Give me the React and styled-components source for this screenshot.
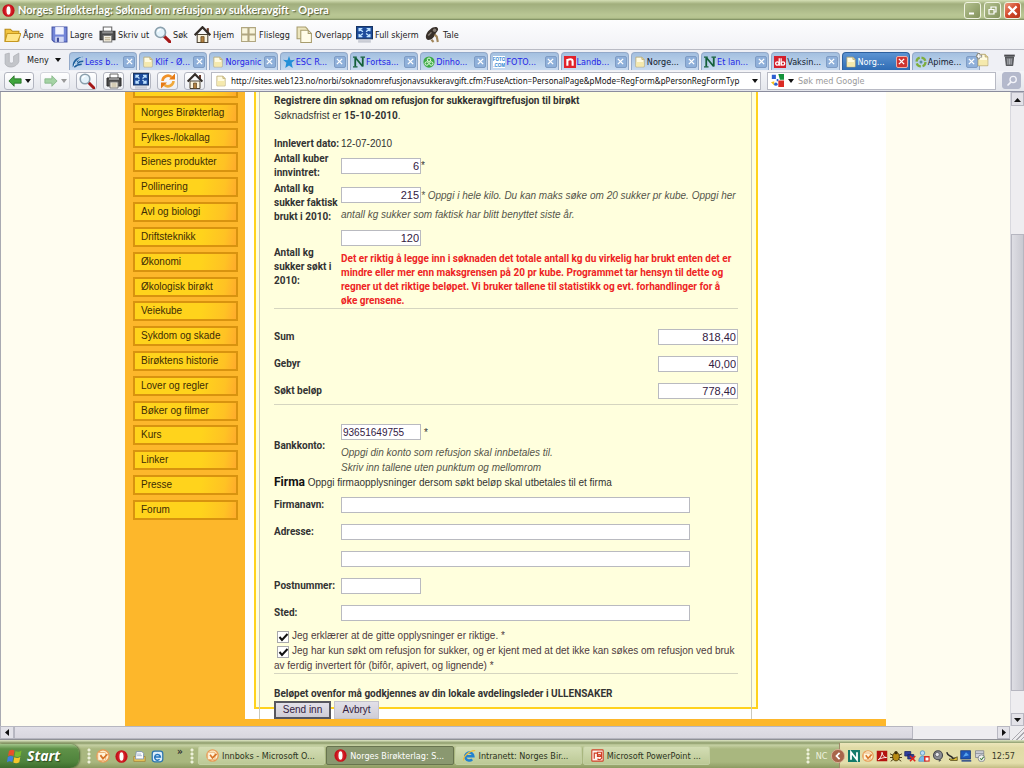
import React from "react";
import styled, { createGlobalStyle } from "styled-components";

const UI = `"DejaVu Sans Condensed", "Noto Sans", sans-serif`;
const WEB = `"Liberation Sans", Arial, sans-serif`;
const STRONG = `Roboto, "Liberation Sans", sans-serif`;

const Global = createGlobalStyle`
  * { box-sizing: border-box; }
  body { margin: 0; font-family: ${WEB}; font-size: 10px; color: #333; overflow: hidden; }
  button, input { font-family: inherit; margin: 0; }
`;

/* ---------- icons ---------- */

const Page = <><path d="M2.5 1.5h8l3 3v10h-11z" fill="#fffbe0" stroke="#b5a468" /><path d="M10.5 1.5v3h3" fill="#eadfa8" stroke="#b5a468" /><path d="M3 8h10v6H3z" fill="#f5e9ad" /></>;
const Opera = <><ellipse cx="8" cy="8" rx="7.5" ry="7.8" fill="#c4101a" /><ellipse cx="8" cy="8" rx="5" ry="7" fill="#e02a30" opacity=".6" /><ellipse cx="8" cy="8" rx="2.5" ry="5.3" fill="#fff" /></>;
const Outlook = <><circle cx="8" cy="8" r="7" fill="#fdf0d0" stroke="#e89a55" strokeWidth="1.6" /><rect x="2" y="4" width="9" height="9" rx="1" fill="#fff3d8" stroke="#e8a868" /><path d="M5 7l3 4 5-5" fill="none" stroke="#d87428" strokeWidth="2" /></>;
const N = <><path d="M3 2v12M3 2l10 12M13 2v12" stroke="#14603a" strokeWidth="2.4" fill="none" /><path d="M0 1.5h5M0 14.5h6M10 1.5h6" stroke="#14603a" strokeWidth="1.4" /></>;

const ICONS = {
  folder: <><path d="M1 3h5l2 2h6v9H1z" fill="#f3c541" stroke="#b88a17" /><path d="M3 7h13l-3 7.500H1z" fill="#ffe588" stroke="#c6981f" /></>,
  save: <><path d="M1 1h14v14H3l-2-2z" fill="#7385d8" stroke="#4453a4" /><rect x="4" y="1" width="8" height="7" fill="#f1f3ff" /><rect x="4" y="10" width="8" height="5" fill="#d2d8f4" /><rect x="5.500" y="11" width="2" height="4" fill="#3f4c9a" /></>,
  print: <><path d="M4 1h8v5H4z" fill="#fff" stroke="#666" /><path d="M1 5h14v8H1z" fill="#4b4b4b" stroke="#2a2a2a" /><path d="M3 5h10v2H3z" fill="#8f8f8f" /><path d="M4 9h8v6H4z" fill="#f4efe2" stroke="#777" /><path d="M5.500 11h5M5.500 13h5" stroke="#b5a988" /></>,
  lens: <><path d="M9 9l6 6" stroke="#a51818" strokeWidth="3" strokeLinecap="round" /><circle cx="6" cy="6" r="4.800" fill="#e4f3fb" stroke="#8ba0ad" strokeWidth="1.600" /><path d="M3.500 5.500a3 3 0 013-2.300" stroke="#fff" strokeWidth="1.300" fill="none" /></>,
  home: <><path d="M3 8h10v7.500H3z" fill="#fbf3dd" stroke="#4a4235" /><path d="M12 2h2v5h-2z" fill="#6d3b2b" /><path d="M.7 8.600L8 1.200l7.300 7.400" fill="none" stroke="#332d28" strokeWidth="2.200" /><path d="M6.500 10h3v5.500h-3z" fill="#b38142" stroke="#5b431f" strokeWidth=".7" /></>,
  tile: <><rect x="1" y="1" width="14" height="14" fill="#d8cfae" /><path d="M1.500 1.500h6v6h-6zM8.500 1.500h6v6h-6zM1.500 8.500h6v6h-6zM8.500 8.500h6v6h-6z" fill="#f9f5dc" stroke="#b0a680" /></>,
  overlap: <><path d="M1 1h8l2 2v9H1z" fill="#ece5bd" stroke="#a79c6e" /><path d="M4.500 4h7l3 3v8.500h-10z" fill="#fffce8" stroke="#a79c6e" /><path d="M11.500 4v3h3" fill="none" stroke="#a79c6e" /></>,
  full: <><rect x=".5" y=".5" width="15" height="11.500" fill="#1d4c9c" stroke="#173563" /><path d="M3 5V2.500h3M10 2.500h3V5M13 7.500V10h-3M6 10H3V7.500M3.500 3l3 2.500M12.500 3l-3 2.500M3.500 9.500l3-2.500M12.500 9.500l-3-2.500" fill="none" stroke="#bfe3ff" strokeWidth="1.300" /><path d="M2 14.500h12" stroke="#c9ccd4" strokeWidth="2.400" /></>,
  talk: <><path d="M3 13C0 10 3 5 6 3c2-2 6-3 7-1 1 2-1 3-2 5-1 3-4 7-8 6z" fill="#38302a" /><path d="M10 8l2 2 1 5M7 13l2 2" stroke="#a0855a" strokeWidth="2" fill="none" /><circle cx="10" cy="4" r="1.600" fill="#857d76" /><path d="M4 9l3-3" stroke="#8d857c" strokeWidth="1.300" /></>,
  menu: <path d="M1 2l4-1v8c1 2 3 2 4 0V4l5-3v8c-2 6-11 7-13 2z" fill="#c3c5ca" stroke="#a8aab0" strokeWidth=".6" />,
  feather: <><path d="M1 15C0 6 6 1 15 1 10 3 8 6 8 8c-3 1-5 3-7 7z" fill="#1d5f9c" /><path d="M3 12c2-5 5-8 10-10M5 9l6-1M3 13l7-2" stroke="#d9ecf9" strokeWidth="1.200" fill="none" /><path d="M3 15c3-3 6-4 10-4M7 10c2-2 4-3 8-3" stroke="#1d5f9c" strokeWidth="1.800" fill="none" /></>,
  page: Page,
  newpage: <>{Page}<path d="M3 0v7M0 3.500h7" stroke="#8a8a80" strokeWidth="3" /><path d="M3.200 1v5M1 3.500h5" stroke="#fff" strokeWidth="1.500" /></>,
  star: <path d="M8 0l2 5.500 6-.5-4.500 4L13 16l-5-3.500L3 16l1.500-7L0 5l6 .500z" fill="#2490d8" />,
  n: N,
  dinho: <><circle cx="8" cy="8" r="7.500" fill="#3faa48" /><circle cx="8" cy="5" r="2.300" fill="none" stroke="#e9ffe5" strokeWidth="1.300" /><circle cx="5" cy="10" r="2.300" fill="none" stroke="#e9ffe5" strokeWidth="1.300" /><circle cx="11" cy="10" r="2.300" fill="none" stroke="#e9ffe5" strokeWidth="1.300" /></>,
  foto: <><rect width="16" height="16" fill="#fff" /><text x="8" y="7" fontSize="6" fontWeight="bold" textAnchor="middle" fill="#2b84cf" fontFamily="Liberation Sans">FOTO</text><text x="8" y="14" fontSize="6" fontWeight="bold" textAnchor="middle" fill="#2b84cf" fontFamily="Liberation Sans">.COM</text></>,
  landb: <><rect width="16" height="16" fill="#e2222b" /><path d="M4.500 13V4M4.500 6c1-2 7-3 7 1v6" stroke="#fff" strokeWidth="2.800" fill="none" /></>,
  db: <><rect width="16" height="16" fill="#d41f2c" /><circle cx="4.500" cy="10" r="2.300" fill="none" stroke="#fff" strokeWidth="1.700" /><path d="M7 3v10M9.500 3v10" stroke="#fff" strokeWidth="1.700" /><circle cx="12" cy="10" r="2.300" fill="none" stroke="#fff" strokeWidth="1.700" /></>,
  apime: <><circle cx="8" cy="8" r="6" fill="none" stroke="#7fae3d" strokeWidth="3" strokeDasharray="7 2.400" /><circle cx="8" cy="8" r="2" fill="#5a8f9e" /></>,
  trash: <><path d="M3 5h10l-1 10.500H4z" fill="#6d6f74" stroke="#3a3b3f" /><path d="M1.500 2h13v2.500h-13z" fill="#494a4e" /><path d="M6 7v7M8 7v7M10 7v7" stroke="#b9bbc0" /></>,
  back: <path d="M1 8l6-6v3.500h8v5H7V14z" fill="#3fa53d" stroke="#1e6a20" strokeWidth=".9" />,
  forward: <path d="M15 8L9 2v3.500H1v5h8V14z" fill="#a4d3a4" stroke="#81b283" strokeWidth=".9" />,
  reload: <><path d="M2.500 8a5.500 5.500 0 019-4" fill="none" stroke="#f0922a" strokeWidth="2.600" /><path d="M9 6.500h6v-6z" fill="#e67a14" /><path d="M13.500 8a5.500 5.500 0 01-9 4" fill="none" stroke="#f0a83a" strokeWidth="2.600" /><path d="M7 9.500H1v6z" fill="#e67a14" /></>,
  google: <><rect width="16" height="16" fill="#fff" /><path d="M1 1h5v5H1zM7 6h2v3H7z" fill="#2c5fd0" /><path d="M9 0h7v7h-5z" fill="#12923b" /><path d="M9 8h7v8H9z" fill="#db2b24" /><path d="M0 10l4-1v5z" fill="#f6c11d" /><ellipse cx="6" cy="12.500" rx="2.200" ry="2" fill="#2c5fd0" /></>,
  go: <><circle cx="9.500" cy="6" r="4.200" fill="none" stroke="#f3f4fa" strokeWidth="1.800" /><path d="M6.500 9.500L2 14" stroke="#f3f4fa" strokeWidth="2.200" /></>,
  opera: Opera,
  outlook: Outlook,
  flag: <><path d="M2 3c2-1.500 3.500-1.500 5.500-.5L6.500 8C4.500 7 3 7 1 8z" fill="#e8502a" /><path d="M8.500 3c2 1 4 1 6-.5L13.500 8c-2 1.300-4 1.300-6 .3z" fill="#7bbb2e" /><path d="M.8 9c2-1.300 3.500-1.200 5.500-.2L5.300 14c-2-1-3.500-1-5.300.2z" fill="#3f7fe0" /><path d="M7.300 9.300c2 1 4 1 6-.3l-1 5.200c-2 1.300-4 1.300-6 .3z" fill="#f5c72a" /></>,
  desk: <><path d="M1 8h14v6H1z" fill="#e9c75b" stroke="#a5843a" /><path d="M4 2h7l2 2v7H3z" fill="#fff" stroke="#7990b0" /><path d="M5 5h5M5 7h6" stroke="#94a8c4" /></>,
  edesk: <><rect x="1.500" y="1.500" width="13" height="13" rx="3" fill="#dceefb" stroke="#2a74ae" strokeWidth="1.500" /><path d="M4.500 8.500h7a3.500 3.500 0 10-1 3" fill="none" stroke="#2273bc" strokeWidth="1.800" /></>,
  ie: <><path d="M3.500 9h9.300a5 5 0 10-1.500 3.800" fill="none" stroke="#2381cf" strokeWidth="3" /><path d="M1 14C-1 10 9 1 15 2" fill="none" stroke="#eebd3a" strokeWidth="1.500" /></>,
  ppt: <><rect x="1" y="1" width="14" height="14" rx="1" fill="#fff3ee" stroke="#cf3f25" strokeWidth="1.400" /><path d="M4 12V5h4M8 4h5v5H8zM8 12a3 3 0 100-4" fill="none" stroke="#cf3f25" strokeWidth="1.500" /></>,
  chevron: <><circle cx="8" cy="8" r="7.500" fill="#a8654a" stroke="#d8b49a" /><path d="M9.800 4.500L6.300 8l3.500 3.500" fill="none" stroke="#fff" strokeWidth="2" /></>,
  nbox: <><rect width="16" height="16" fill="#137a6a" /><path d="M4 13V3l8 10V3" fill="none" stroke="#fff" strokeWidth="2.400" /></>,
  pdf: <><rect x="1" y="1" width="14" height="14" fill="#b4120f" /><path d="M3 13c4-3 5-7 5-10 1 5 3 7 6 7-4 0-8 1-11 3z" fill="none" stroke="#fff" strokeWidth="1.200" /></>,
  bug: <><ellipse cx="8" cy="9" rx="4.500" ry="5.500" fill="#b88b12" stroke="#3c2e08" /><circle cx="8" cy="3.500" r="2.200" fill="#3c2e08" /><path d="M0 5l4 2M0 10h4M1 15l4-3M16 5l-4 2M16 10h-4M15 15l-4-3" stroke="#3c2e08" strokeWidth="1.200" /></>,
  netx: <><path d="M1 2h8v6H1zM5 6h8v6H5z" fill="#2f3f9c" stroke="#1b2560" /><path d="M8 8l7 7M15 8l-7 7" stroke="#df2620" strokeWidth="2.200" /></>,
  user: <><circle cx="6" cy="4" r="3" fill="#bcdcf4" stroke="#4d8dc0" /><path d="M1 15c0-9 10-9 10 0z" fill="#79b8e8" stroke="#4d8dc0" /><rect x="8" y="8" width="7.500" height="7.500" fill="#d92d24" /><path d="M10 10h4v4h-4z" fill="#fff" /></>,
  speaker: <><circle cx="8" cy="7" r="6" fill="#8b8d93" stroke="#44464b" strokeWidth="1.500" /><circle cx="7" cy="6" r="2.800" fill="#e4e5e8" stroke="#55575c" /><path d="M9 15l3-2" stroke="#44464b" strokeWidth="1.500" /></>,
  plug: <><path d="M1 3c2 7 6 3 8 8h5" fill="none" stroke="#2b2b2b" strokeWidth="2" /><path d="M4 12h6l5-3v5H6z" fill="#e2c33d" stroke="#50451c" /></>,
  screen: <><rect x="1" y="1" width="13" height="11" fill="#1e57b8" stroke="#17356f" /><path d="M4 9l4-6 4 4z" fill="#58a5ee" /><path d="M2 14.500h13" stroke="#28488a" strokeWidth="2" /></>,
  safe: <><path d="M2 1h11v9H2z" fill="#cfd2d8" stroke="#7b7f88" /><path d="M2 4.500h11" stroke="#7b7f88" /><circle cx="10" cy="11" r="4.500" fill="#f2f3f0" stroke="#70757c" /><path d="M8 11l2 2 3-4" fill="none" stroke="#3c7a3c" strokeWidth="1.400" /></>,
};

const Svg = styled.svg`
  flex: none;
  display: block;
  width: ${(p) => p.$s}px;
  height: ${(p) => p.$s}px;
`;
const Icon = ({ name, size = 14 }) => (
  <Svg $s={size} viewBox="0 0 16 16" aria-hidden="true">{ICONS[name]}</Svg>
);

const Caret = styled.span`
  flex: none;
  border: 3px solid transparent;
  border-top: 4px solid ${(p) => p.$c || "#111"};
  border-bottom: 0;
`;

/* ---------- browser frame ---------- */

const Shell = styled.div`
  height: 100vh;
  display: flex;
  flex-direction: column;
  background: #fff;
`;
const TitleBar = styled.header`
  flex: none;
  height: 20px;
  display: flex;
  align-items: center;
  gap: 3px;
  padding: 0 3px 0 2px;
  background: linear-gradient(#d5dfb6 0, #a1ae7c 4px, #a9b686 8px, #b9c794 15px, #b4c28e 18px, #75865a 100%);
`;
const Title = styled.h1`
  flex: 1;
  margin: 0;
  font: bold 11px/18px Lato, sans-serif;
  color: #fff;
  text-shadow: 1px 1px 1px #4e5a36;
  white-space: nowrap;
`;
const WinButton = styled.button`
  width: 17px;
  height: 17px;
  padding: 0;
  display: grid;
  place-items: center;
  border: 1px solid #f0f3e2;
  border-radius: 3px;
  background: ${(p) => (p.$close ? "linear-gradient(135deg,#ee9a7e,#d2492a 50%,#b63418)" : "linear-gradient(135deg,#b3c08e,#83935c)")};
`;
const ToolBar = styled.nav`
  flex: none;
  height: 29px;
  display: flex;
  align-items: center;
  padding-left: 4px;
  background: linear-gradient(#fdfdfe, #f1f2f6);
`;
const Tool = styled.button`
  width: ${(p) => p.$w}px;
  display: flex;
  align-items: center;
  gap: 2px;
  padding: 0;
  border: 0;
  background: none;
  font: 9px/12px ${UI};
  color: #222;
  white-space: nowrap;
`;
const TabBar = styled.div`
  flex: none;
  height: 22px;
  display: flex;
  align-items: flex-end;
  padding: 0 8px 1px 4px;
  border-top: 1px solid #b9bbc4;
  background: #eff0f5;
`;
const MenuButton = styled.button`
  width: 65px;
  height: 20px;
  display: flex;
  align-items: center;
  gap: 6px;
  padding: 0;
  border: 0;
  background: none;
  font: 9px/12px ${UI};
  color: #222;
`;
const Tabs = styled.div`
  flex: 1;
  display: grid;
  grid-template-columns: repeat(13, minmax(0, 1fr));
  gap: 2px;
`;
const Tab = styled.div`
  height: 18px;
  display: flex;
  align-items: center;
  gap: 1px;
  padding: 0 1px 0 2px;
  border: 1px solid ${(p) => (p.$active ? "#2c5f9e" : "#93a9c9")};
  border-bottom: 0;
  border-radius: 4px 4px 0 0;
  background: ${(p) => (p.$active ? "linear-gradient(#5b93d3,#2f6cb4)" : "linear-gradient(#a4c0e0 0,#b9d0ea 60%,#c8daf0)")};
  color: ${(p) => (p.$active ? "#fff" : p.$seen ? "#15202e" : "#2626e8")};
`;
const TabName = styled.span`
  flex: 1;
  white-space: nowrap;
  font: 9px/14px ${UI};
`;
const TabClose = styled.button`
  flex: none;
  width: 12px;
  height: 12px;
  padding: 0;
  display: grid;
  place-items: center;
  border: 1px solid ${(p) => (p.$active ? "#f0b0a8" : "#7f9cc4")};
  border-radius: 2px;
  background: ${(p) => (p.$active ? "#cf3431" : "#8fb0da")};
`;
const TabTools = styled.div`
  flex: none;
  display: flex;
  gap: 13px;
  margin-left: -4px;
  padding-bottom: 3px;
  position: relative;
`;
const AddressBar = styled.div`
  flex: none;
  height: 21px;
  display: flex;
  align-items: center;
  gap: 6px;
  padding: 0 3px 1px 4px;
  border-bottom: 1px solid #8b8d9e;
  background: linear-gradient(#f4f5f8, #e4e6ec);
`;
const NavButton = styled.button`
  flex: none;
  width: ${(p) => (p.$wide ? 30 : 21)}px;
  height: 18px;
  display: flex;
  align-items: center;
  justify-content: center;
  gap: 3px;
  padding: 0;
  border: 1px solid ${(p) => (p.$off ? "#d3d5dc" : "#b2b5c0")};
  border-radius: 3px;
  background: linear-gradient(#fff, #eceef3);
`;
const Field = styled.div`
  flex: ${(p) => p.$grow} 1 0;
  height: 18px;
  display: flex;
  align-items: center;
  gap: 4px;
  padding: 0 2px 0 3px;
  border: 1px solid #b8bac4;
  background: #fff;
`;
const BareInput = styled.input`
  flex: 1;
  min-width: 0;
  padding: 0;
  border: 0;
  outline: 0;
  background: none;
  font: ${(p) => (p.$url ? 8 : 9)}px/14px ${(p) => (p.$url ? `"Noto Sans", sans-serif` : UI)};
  color: #111;
  &::placeholder { color: #9a9a9a; opacity: 1; }
`;
const GoButton = styled(NavButton)`
  width: 19px;
  height: 17px;
  border-color: #b4b9cc;
  background: #b4b9cc;
`;

/* ---------- scrolling viewport ---------- */

const Viewport = styled.main`
  flex: 1;
  min-height: 0;
  display: grid;
  grid-template-columns: minmax(0, 1fr) 14px;
  grid-template-rows: minmax(0, 1fr) 14px;
`;
const Canvas = styled.div`
  overflow: hidden;
  background: #fffdf0;
  border-left: 1px solid #a9aab2;
`;
const VBar = styled.div`
  display: grid;
  grid-template-rows: 14px 128fr 457fr 22fr 13px;
  background: #eeedf0;
  border-left: 1px solid #d8d8de;
`;
const HBar = styled.div`
  display: grid;
  grid-template-columns: 14px 899fr 84fr 13px;
  background: #eeedf0;
  border-bottom: 1px solid #8f9096;
`;
const Thumb = styled.div`
  border: 1px solid #b6b6c0;
  background: linear-gradient(${(p) => (p.$v ? "to right" : "to bottom")}, #dedee4, #c9c9d1);
`;
const HThumb = styled(Thumb)`
  background: linear-gradient(#e2e0e8, #d9d7df);
`;
const Arrow = styled.button`
  padding: 0;
  display: grid;
  place-items: center;
  border: 1px solid #b8b8c2;
  background: #e3e2e8;
`;
const ArrowSvg = styled.svg`
  width: 7px;
  height: 7px;
  display: block;
`;
const Grip = styled.div`
  background: linear-gradient(135deg, #ecebee 50%, transparent 50%), repeating-linear-gradient(135deg, #ecebee 0 2px, #aaa9af 2px 3px);
`;

/* ---------- web page ---------- */

const Site = styled.div`
  max-width: 761px;
  margin: 0 auto;
  background: #fff;
  border-bottom: 7px solid #fdb72b;
`;
const SiteBody = styled.div`
  display: grid;
  grid-template-columns: 120px minmax(0, 1fr);
`;
const Side = styled.nav`
  background: #fdb72b;
  overflow: hidden;
`;
const SideList = styled.ul`
  list-style: none;
  margin: -14px 7px 0 8px;
  padding: 0;
  height: 442px;
  display: flex;
  flex-direction: column;
  justify-content: space-between;
`;
const SideLink = styled.a`
  display: block;
  height: 20px;
  padding-left: 6px;
  border: 2px solid #d8930f;
  background: linear-gradient(100deg, #ffd31c 0, #ffd31c 65%, #ffc224 88%, #ffab2c 100%);
  font-size: 10px;
  line-height: 16px;
  color: #3c2c05;
  text-decoration: none;
`;
const Panel = styled.section`
  width: 504px;
  margin: 0 0 10px 9px;
  padding: 0 4px 0 3px;
  border: 2px solid #ffd21e;
  border-top: 0;
  background: #ffffdd;
`;
const Inner = styled.form`
  margin-bottom: -12px;
  padding: 1px 13px 0 14px;
  border: 1px solid #c9c9bd;
  border-width: 0 1px;
  b { font-family: ${STRONG}; }
`;
const Line = styled.p`
  margin: 0;
  line-height: 15px;
  white-space: nowrap;
`;
const Row = styled.div`
  display: grid;
  grid-template-columns: 67px minmax(0, 1fr);
  align-items: center;
  min-height: ${(p) => p.$h || 15}px;
  margin-top: ${(p) => p.$mt || 0}px;
`;
const Label = styled.label`
  font-family: ${STRONG};
  font-weight: bold;
  line-height: 14px;
  white-space: nowrap;
`;
const Cell = styled.div`
  padding-top: ${(p) => p.$pt || 0}px;
  white-space: nowrap;
`;
const Control = styled.div`
  display: flex;
  align-items: center;
  gap: ${(p) => p.$gap || 0}px;
  min-height: ${(p) => p.$h || 16}px;
`;
const Note = styled.em`
  display: block;
  line-height: ${(p) => p.$lh || 15}px;
  color: #55554a;
`;
const Warning = styled.strong`
  display: block;
  margin-top: 6px;
  font-family: ${STRONG};
  line-height: 14px;
  color: #ee2424;
`;
const Text = styled.input`
  width: ${(p) => (p.$long ? 349 : 80)}px;
  height: 16px;
  padding: 0 1px;
  border: 1px solid #b9bac0;
  background: #fff;
  font-size: ${(p) => (p.$num ? 11 : 10)}px;
  text-align: ${(p) => (p.$num ? "right" : "left")};
  color: #33203f;
`;
const Rule = styled.hr`
  height: 1px;
  margin: 0;
  border: 0;
  background: #d5d5c0;
`;
const Sums = styled.div`
  padding: 14px 0 0;
`;
const SumRow = styled.div`
  height: 27px;
  display: flex;
  align-items: center;
  justify-content: space-between;
`;
const FirmLine = styled(Line)`
  margin-bottom: 1px;
  & > b { font-size: 12px; color: #111; }
`;
const Checks = styled.div`
  padding-top: 2px;
`;
const Check = styled.label`
  display: block;
  line-height: 15px;
  white-space: nowrap;
  color: #4e3a40;
`;
const Tick = styled.input`
  appearance: none;
  width: 12px;
  height: 12px;
  margin: 0 3px;
  border: 1px solid #a9a9ad;
  background: #fff;
`;
const TickBox = styled.span`
  display: inline-grid;
  vertical-align: -4px;
  & > * { grid-area: 1 / 1; }
  & > svg { width: 12px; height: 12px; margin-left: 3px; pointer-events: none; }
`;
const Buttons = styled.div`
  display: flex;
  gap: 3px;
`;
const Push = styled.button`
  width: ${(p) => (p.$main ? 57 : 45)}px;
  height: 18px;
  padding: 0;
  border: ${(p) => (p.$main ? "2px solid #57575f" : "1px solid #c4c3cc")};
  background: linear-gradient(#e2e0e8, #cfcdd6);
  font-size: 10px;
  line-height: 14px;
  color: #33203f;
`;

/* ---------- taskbar ---------- */

const TaskBar = styled.footer`
  flex: none;
  height: 28px;
  padding-top: 4px;
  display: flex;
  background: linear-gradient(#dfe7c6 0, #8d9c6b 3px, #c5d0a3 5px, #a9b77f 9px, #a9b77f 22px, #8d9b62 100%);
  font: 9px/12px ${UI};
`;
const Start = styled.button`
  width: 79px;
  display: flex;
  align-items: center;
  gap: 4px;
  padding: 0 0 0 7px;
  border: 0;
  border-radius: 0 9px 9px 0;
  background: linear-gradient(#a3c58b 0, #5f9148 20%, #4f833c 75%, #3d6c2d);
  box-shadow: 1px 0 2px #44602f;
  font: italic bold 14px/16px "Open Sans", sans-serif;
  color: #fff;
  text-shadow: 1px 1px 1px #2c4a1f;
`;
const Dots = styled.span`
  flex: none;
  align-self: center;
  width: 4px;
  height: 16px;
  margin: 0 ${(p) => p.$mr || 0}px 0 ${(p) => p.$ml || 0}px;
  background: radial-gradient(circle at 2px 2px, #eef2da 1px, transparent 2px) 0 0 / 4px 4px;
`;
const Quick = styled.div`
  display: flex;
  align-items: center;
  gap: 5px;
  width: 94px;
`;
const More = styled.b`
  margin: 0 0 8px 8px;
  font-size: 10px;
`;
const Tasks = styled.div`
  flex: 0 1 512px;
  min-width: 0;
  display: grid;
  grid-template-columns: repeat(4, minmax(0, 1fr));
  gap: 1px;
  padding: 2px 0 3px;
`;
const Task = styled.button`
  display: flex;
  align-items: center;
  gap: 3px;
  min-width: 0;
  padding: 0 4px 0 7px;
  border: 1px solid ${(p) => (p.$active ? "#68744f" : "#c3cfa2")};
  border-radius: 2px;
  background: ${(p) => (p.$active ? "#8a9870" : "linear-gradient(#d3ddb4,#bcc996)")};
  font: inherit;
  color: ${(p) => (p.$active ? "#fff" : "#2c3320")};
  white-space: nowrap;
  overflow: hidden;
`;
const Spacer = styled.div`
  flex: 1;
`;
const Lang = styled.span`
  align-self: center;
  width: 15px;
  color: #eef1dd;
  font-size: 9px;
`;
const TrayToggle = styled.button`
  align-self: center;
  position: relative;
  margin-right: -6px;
  padding: 0;
  border: 0;
  background: none;
`;
const Tray = styled.div`
  display: flex;
  align-items: center;
  gap: 2px;
  margin-top: -1px;
  padding: 0 9px 0 8px;
  border-left: 1px solid #a0896a;
  background: linear-gradient(#ece6bb 0, #e0dba6 5px, #e4dfac 80%, #c3bd84);
  color: #3b3b28;
`;
const Clock = styled.time`
  margin-left: 4px;
`;

/* ---------- data ---------- */

const tools = [
  ["folder", "Åpne", 47], ["save", "Lagre", 48], ["print", "Skriv ut", 55], ["lens", "Søk", 40],
  ["home", "Hjem", 46], ["tile", "Flislegg", 56], ["overlap", "Overlapp", 60], ["full", "Full skjerm", 68], ["talk", "Tale", 40],
];
const tabs = [
  ["feather", "Less b..."], ["page", "Klif - Ø..."], ["page", "Norganic"], ["star", "ESC R..."], ["n", "Fortsa..."],
  ["dinho", "Dinho..."], ["foto", "FOTO..."], ["landb", "Landb..."], ["page", "Norge...", true], ["n", "Et lan..."],
  ["db", "Vaksin...", true], ["page", "Norg...", true, true], ["apime", "Apime...", true],
];
const links = [
  "Norges Birøkterlag", "Fylkes-/lokallag", "Bienes produkter", "Pollinering", "Avl og biologi", "Driftsteknikk",
  "Økonomi", "Økologisk birøkt", "Veiekube", "Sykdom og skade", "Birøktens historie", "Lover og regler",
  "Bøker og filmer", "Kurs", "Linker", "Presse", "Forum",
];
const sums = [["sum", "Sum", "818,40"], ["gebyr", "Gebyr", "40,00"], ["belop", "Søkt beløp", "778,40"]];
const tasks = [
  ["outlook", "Innboks - Microsoft O..."], ["opera", "Norges Birøkterlag: S...", true],
  ["ie", "Intranett: Norges Bir..."], ["ppt", "Microsoft PowerPoint ..."],
];
const tray = ["nbox", "outlook", "pdf", "bug", "netx", "user", "speaker", "plug", "screen", "safe"];

const Cross = ({ size = 7 }) => (
  <Svg $s={size} viewBox="0 0 8 8"><path d="M1 1l6 6M7 1L1 7" stroke="#fff" strokeWidth="1.6" /></Svg>
);
const ARROWS = { up: "M0 6h7L3.500 2z", down: "M0 2h7L3.500 6z", left: "M5 0v7L1 3.500z", right: "M2 0v7l4-3.500z" };
const ScrollArrow = ({ dir }) => (
  <Arrow type="button" aria-label={dir}><ArrowSvg viewBox="0 0 7 7"><path d={ARROWS[dir]} fill="#111" /></ArrowSvg></Arrow>
);
const Ticked = ({ id }) => (
  <TickBox>
    <Tick id={id} type="checkbox" defaultChecked />
    <svg viewBox="0 0 12 12"><path d="M2.500 6l2.500 3 5.500-6" fill="none" stroke="#111" strokeWidth="2" /></svg>
  </TickBox>
);

export default function App() {
  return (
    <Shell>
      <Global />
      <TitleBar>
        <Icon name="opera" size={13} />
        <Title>Norges Birøkterlag: Søknad om refusjon av sukkeravgift - Opera</Title>
        <WinButton aria-label="Minimer"><Svg $s={11} viewBox="0 0 11 11"><path d="M2 8.500h5" stroke="#fff" strokeWidth="2" /></Svg></WinButton>
        <WinButton aria-label="Gjenopprett"><Svg $s={11} viewBox="0 0 11 11"><path d="M4 4V2h5v5H7M2 4.500h5V9H2z" stroke="#fff" fill="none" strokeWidth="1.200" /></Svg></WinButton>
        <WinButton $close aria-label="Lukk"><Cross size={11} /></WinButton>
      </TitleBar>
      <ToolBar>
        {tools.map(([icon, name, w]) => (
          <Tool key={name} type="button" $w={w}><Icon name={icon} size={17} />{name}</Tool>
        ))}
      </ToolBar>
      <TabBar>
        <MenuButton type="button"><Icon name="menu" size={17} />Meny<Caret /></MenuButton>
        <Tabs>
          {tabs.map(([icon, name, seen, active], i) => (
            <Tab key={i} $seen={seen} $active={active}>
              <Icon name={icon} size={12} />
              <TabName>{name}</TabName>
              <TabClose type="button" $active={active} aria-label="Lukk fane"><Cross /></TabClose>
            </Tab>
          ))}
        </Tabs>
        <TabTools><Icon name="newpage" size={14} /><Icon name="trash" size={13} /></TabTools>
      </TabBar>
      <AddressBar>
        <NavButton $wide aria-label="Tilbake"><Icon name="back" size={14} /><Caret /></NavButton>
        <NavButton $wide $off aria-label="Frem"><Icon name="forward" size={14} /><Caret $c="#999" /></NavButton>
        {["lens", "print", "full", "reload", "home"].map((n) => (
          <NavButton key={n} aria-label={n}><Icon name={n} size={16} /></NavButton>
        ))}
        <Field $grow={553}>
          <Icon name="page" size={12} />
          <BareInput $url aria-label="Adresse" defaultValue="http://sites.web123.no/norbi/soknadomrefusjonavsukkeravgift.cfm?FuseAction=PersonalPage&pMode=RegForm&pPersonRegFormTyp" />
          <Caret />
        </Field>
        <Field $grow={226}>
          <Icon name="google" size={13} /><Caret />
          <BareInput aria-label="Søk" placeholder="Søk med Google" />
        </Field>
        <GoButton aria-label="Søk"><Icon name="go" size={12} /></GoButton>
      </AddressBar>

      <Viewport>
        <Canvas>
          <Site>
            <SiteBody>
              <Side>
                <SideList>
                  <li><SideLink href="#" aria-label="Forrige" /></li>
                  {links.map((l) => <li key={l}><SideLink href="#">{l}</SideLink></li>)}
                </SideList>
              </Side>
              <Panel>
                <Inner onSubmit={(e) => e.preventDefault()}>
                  <Line><b>Registrere din søknad om refusjon for sukkeravgiftrefusjon til birøkt</b></Line>
                  <Line>Søknadsfrist er <b>15-10-2010</b>.</Line>
                  <Row $mt={13}><Label as="b">Innlevert dato:</Label><span>12-07-2010</span></Row>
                  <Row $h={29}>
                    <Label htmlFor="kuber">Antall kuber<br />innvintret:</Label>
                    <Control><Text id="kuber" $num defaultValue="6" />*</Control>
                  </Row>
                  <Row $h={44}>
                    <Label htmlFor="brukt">Antall kg<br />sukker faktisk<br />brukt i 2010:</Label>
                    <Cell $pt={5}>
                      <Control $h={20}>
                        <Text id="brukt" $num defaultValue="215" />
                        <Note>* Oppgi i hele kilo. Du kan maks søke om 20 sukker pr kube. Oppgi her</Note>
                      </Control>
                      <Note $lh={20}>antall kg sukker som faktisk har blitt benyttet siste år.</Note>
                    </Cell>
                  </Row>
                  <Row $h={83}>
                    <Label htmlFor="sokt">Antall kg<br />sukker søkt i<br />2010:</Label>
                    <Cell $pt={4}>
                      <Control><Text id="sokt" $num defaultValue="120" /></Control>
                      <Warning>
                        Det er riktig å legge inn i søknaden det totale antall kg du virkelig har brukt enten det er<br />
                        mindre eller mer enn maksgrensen på 20 pr kube. Programmet tar hensyn til dette og<br />
                        regner ut det riktige beløpet. Vi bruker tallene til statistikk og evt. forhandlinger for å<br />
                        øke grensene.
                      </Warning>
                    </Cell>
                  </Row>
                  <Rule />
                  <Sums>
                    {sums.map(([id, name, value]) => (
                      <SumRow key={id}>
                        <Label htmlFor={id}>{name}</Label>
                        <Text id={id} $num defaultValue={value} />
                      </SumRow>
                    ))}
                  </Sums>
                  <Rule />
                  <Row $mt={12}>
                    <Label htmlFor="konto">Bankkonto:</Label>
                    <Cell $pt={7}>
                      <Control $gap={3}><Text id="konto" defaultValue="93651649755" />*</Control>
                      <Cell $pt={5}>
                        <Note>Oppgi din konto som refusjon skal innbetales til.</Note>
                        <Note>Skriv inn tallene uten punktum og mellomrom</Note>
                      </Cell>
                    </Cell>
                  </Row>
                  <FirmLine><b>Firma</b> Oppgi firmaopplysninger dersom søkt beløp skal utbetales til et firma</FirmLine>
                  <Row $h={27}><Label htmlFor="firma">Firmanavn:</Label><Text id="firma" $long /></Row>
                  <Row $h={27}><Label htmlFor="adr1">Adresse:</Label><Text id="adr1" $long /></Row>
                  <Row $h={27}><span /><Text aria-label="Adresse, linje 2" $long /></Row>
                  <Row $h={27}><Label htmlFor="postnr">Postnummer:</Label><Text id="postnr" /></Row>
                  <Row $h={27}><Label htmlFor="sted">Sted:</Label><Text id="sted" $long /></Row>
                  <Checks>
                    <Check><Ticked id="c1" />Jeg erklærer at de gitte opplysninger er riktige. *</Check>
                    <Check>
                      <Ticked id="c2" />Jeg har kun søkt om refusjon for sukker, og er kjent med at det ikke kan søkes om refusjon ved bruk<br />
                      av ferdig invertert fôr (bifôr, apivert, og lignende) *
                    </Check>
                  </Checks>
                  <Rule />
                  <Row $mt={12}><Label as="b">Beløpet ovenfor må godkjennes av din lokale avdelingsleder i ULLENSAKER</Label></Row>
                  <Buttons><Push type="submit" $main>Send inn</Push><Push type="reset">Avbryt</Push></Buttons>
                </Inner>
              </Panel>
            </SiteBody>
          </Site>
        </Canvas>
        <VBar><ScrollArrow dir="up" /><span /><Thumb $v /><span /><ScrollArrow dir="down" /></VBar>
        <HBar><ScrollArrow dir="left" /><HThumb /><span /><ScrollArrow dir="right" /></HBar>
        <Grip />
      </Viewport>

      <TaskBar>
        <Start type="button"><Icon name="flag" size={16} />Start</Start>
        <Dots $ml={8} $mr={5} />
        <Quick>
          <Icon name="outlook" size={14} /><Icon name="opera" size={13} /><Icon name="desk" size={13} /><Icon name="edesk" size={13} />
          <More>»</More>
        </Quick>
        <Dots $mr={4} />
        <Tasks>
          {tasks.map(([icon, name, active]) => (
            <Task key={name} type="button" $active={active}><Icon name={icon} size={13} />{name}</Task>
          ))}
        </Tasks>
        <Spacer />
        <Dots $mr={6} />
        <Lang>NC</Lang>
        <TrayToggle aria-label="Vis ikoner"><Icon name="chevron" size={14} /></TrayToggle>
        <Tray>
          {tray.map((n) => <Icon key={n} name={n} size={12} />)}
          <Clock>12:57</Clock>
        </Tray>
      </TaskBar>
    </Shell>
  );
}
